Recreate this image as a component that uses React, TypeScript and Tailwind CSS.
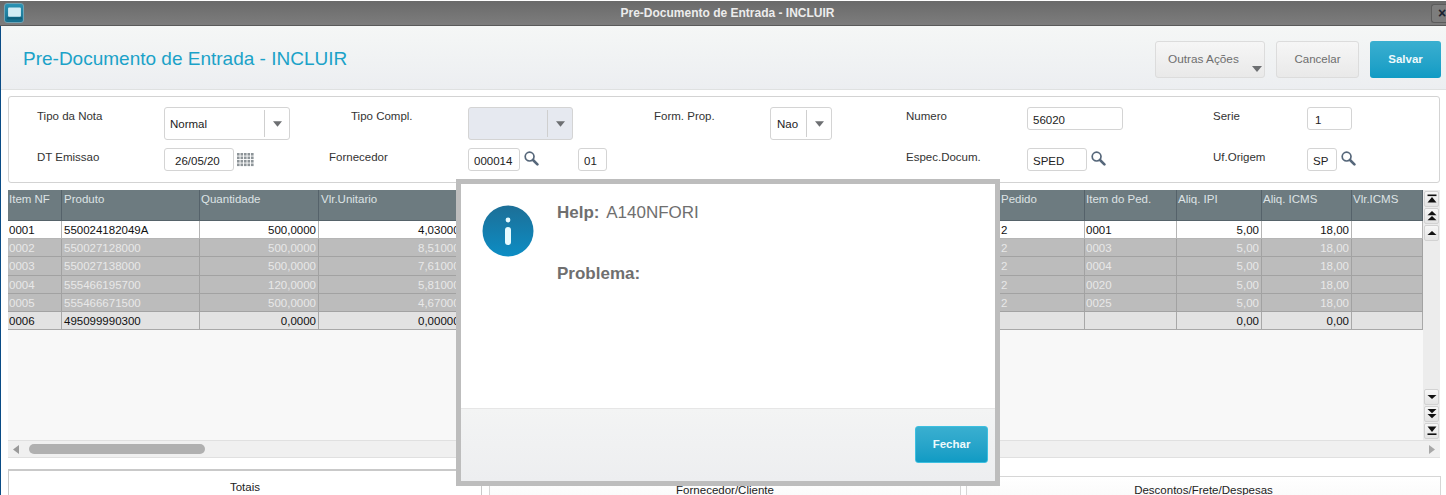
const font = "font-['Liberation_Sans',Arial,sans-serif]"

type Column = { title: string; width: string; right?: boolean; pad: string }

const columns: Column[] = [
  { title: "Item NF", width: "w-[54px]", pad: "pl-[1px]" },
  { title: "Produto", width: "w-[138px]", pad: "pl-[2px]" },
  { title: "Quantidade", width: "w-[119px]", right: true, pad: "pl-[1px]" },
  { title: "Vlr.Unitario", width: "w-[150px]", right: true, pad: "pl-[2px]" },
  { title: "", width: "w-[531px]", pad: "" },
  { title: "Pedido", width: "w-[85px]", pad: "pl-[1px]" },
  { title: "Item do Ped.", width: "w-[92px]", pad: "pl-[1px]" },
  { title: "Aliq. IPI", width: "w-[85px]", right: true, pad: "pl-[1px]" },
  { title: "Aliq. ICMS", width: "w-[90px]", right: true, pad: "pl-[1px]" },
  { title: "Vlr.ICMS", width: "w-[71px]", right: true, pad: "pl-[1px]" },
]

const rows = [
  ["0001", "550024182049A", "500,0000", "4,030000", "", "2", "0001", "5,00", "18,00", ""],
  ["0002", "550027128000", "500,0000", "8,510000", "", "2", "0003", "5,00", "18,00", ""],
  ["0003", "550027138000", "500,0000", "7,610000", "", "2", "0004", "5,00", "18,00", ""],
  ["0004", "555466195700", "120,0000", "5,810000", "", "2", "0020", "5,00", "18,00", ""],
  ["0005", "555466671500", "500,0000", "4,670000", "", "2", "0025", "5,00", "18,00", ""],
  ["0006", "495099990300", "0,0000", "0,000000", "", "", "", "0,00", "0,00", ""],
]

function rowTone(index: number) {
  if (index === 0) return "bg-white text-[#111] border-[#b5b5b5]"
  if (index === 5) return "bg-[#e2e2e2] text-[#111] border-[#a8a8a8]"
  return "bg-[#bcbcbc] text-[#e8e8e8] border-[#a2a2a2]"
}

function Caret({ className }: { className: string }) {
  return (
    <svg viewBox="0 0 10 6" className={className}>
      <polygon points="0,0 10,0 5,6" fill="#6d6f72" />
    </svg>
  )
}

function Label({ width, children }: { width: string; children?: string }) {
  return <div className={`${width} shrink-0 h-[19px] leading-[19px] text-[11.5px] text-[#333]`}>{children}</div>
}

function Field({ width, pad = "pl-[5px]", children }: { width: string; pad?: string; children: string }) {
  return (
    <div className={`${width} ${pad} shrink-0 h-[23px] leading-[24px] bg-white border border-[#d4d4d4] rounded-[3px] text-[11.5px] text-[#222]`}>
      {children}
    </div>
  )
}

function Combo({ width, value, disabled, pad = "pl-[5px]" }: { width: string; value?: string; disabled?: boolean; pad?: string }) {
  return (
    <div
      className={`${width} shrink-0 h-[33px] flex items-center border border-[#d4d4d4] rounded-[3px] text-[11.5px] text-[#222] ${
        disabled ? "bg-[#e6e9f0]" : "bg-white"
      }`}
    >
      <span className={`flex-1 ${pad} pt-[2px]`}>{value}</span>
      <span className="w-[25px] flex h-[27px] items-center justify-center border-l border-[#cfcfcf]">
        <Caret className="w-[9px] h-[6px]" />
      </span>
    </div>
  )
}

// magnifier beside the lookup fields
function Lookup() {
  return (
    <svg viewBox="0 0 15 15" className="ml-[4px] mt-[3px] w-[15px] h-[15px] shrink-0">
      <circle cx="5.6" cy="5.6" r="4.4" fill="none" stroke="#56677a" strokeWidth="1.7" />
      <line x1="9" y1="9" x2="13.4" y2="13.4" stroke="#56677a" strokeWidth="2.6" strokeLinecap="round" />
    </svg>
  )
}

function CalendarGrid() {
  const cells = []
  for (let y = 0; y < 4; y++) {
    for (let x = 0; x < 5; x++) {
      cells.push(<rect key={`${x}-${y}`} x={x * 3.5} y={y * 3.5} width="2.6" height="2.6" fill="#8d9498" />)
    }
  }
  return (
    <svg viewBox="0 0 17 14" className="ml-[3px] mt-[5px] w-[17px] h-[14px] shrink-0">
      {cells}
    </svg>
  )
}

// arrows used by the vertical paging buttons
function PagerButton({ kind }: { kind: "top" | "pageUp" | "up" | "down" | "pageDown" | "bottom" }) {
  const shapes = {
    top: (
      <>
        <rect x="0.5" y="0.5" width="9" height="1.6" />
        <polygon points="5,3 9.5,8.5 0.5,8.5" />
      </>
    ),
    pageUp: (
      <>
        <polygon points="5,0 9.5,4.2 0.5,4.2" />
        <polygon points="5,5 9.5,9.2 0.5,9.2" />
      </>
    ),
    up: <polygon points="5,3 9.5,7 0.5,7" />,
    down: <polygon points="0.5,3 9.5,3 5,7" />,
    pageDown: (
      <>
        <polygon points="0.5,0 9.5,0 5,4.2" />
        <polygon points="0.5,5 9.5,5 5,9.2" />
      </>
    ),
    bottom: (
      <>
        <polygon points="0.5,0.5 9.5,0.5 5,6" />
        <rect x="0.5" y="7.4" width="9" height="1.6" />
      </>
    ),
  }
  return (
    <div className="w-[15px] h-[16px] flex items-center justify-center rounded-[2px] border border-[#d2d2d2] bg-gradient-to-b from-[#f7f7f7] to-[#e4e4e4]">
      <svg viewBox="0 0 10 10" className="w-[10px] h-[10px]" fill="#111">
        {shapes[kind]}
      </svg>
    </div>
  )
}

function GridTable() {
  return (
    <div className="w-[1415px] shrink-0">
      <div className="flex h-[31px] bg-[#6d7b80] border-b border-[#56636a]">
        {columns.map((col, i) => (
          <div key={i} className={`${col.width} ${col.pad} shrink-0 border-r border-[#55626a] text-[11.5px] leading-[18px] text-[#dde3e5]`}>
            {col.title}
          </div>
        ))}
      </div>
      {rows.map((row, r) => (
        <div key={r} className={`flex h-[18.2px] border-b ${rowTone(r)}`}>
          {columns.map((col, c) => (
            <div
              key={c}
              className={`${col.width} shrink-0 border-r border-inherit text-[11.5px] leading-[18px] overflow-hidden whitespace-nowrap ${
                col.right ? "text-right pr-[2px]" : col.pad
              }`}
            >
              {row[c]}
            </div>
          ))}
        </div>
      ))}
    </div>
  )
}

function HelpDialog() {
  return (
    <div className="absolute left-[456px] top-[179px] w-[544px] h-[307px] flex flex-col border-[5px] border-[#bdbdbd] bg-white">
      <div className="flex-1 flex">
        <div className="w-[96px] shrink-0 pl-[21px] pt-[21px]">
          <svg viewBox="0 0 52 52" className="w-[52px] h-[52px]">
            <defs>
              <linearGradient id="infoFill" x1="0" y1="0" x2="0" y2="1">
                <stop offset="0" stopColor="#1d6f97" />
                <stop offset="1" stopColor="#0c8dc4" />
              </linearGradient>
            </defs>
            <circle cx="26" cy="26" r="25.5" fill="url(#infoFill)" />
            <circle cx="26" cy="15" r="2.4" fill="#e6fbff" />
            <rect x="23" y="22" width="6" height="18" rx="3" fill="#e6fbff" />
          </svg>
        </div>
        <div className="text-[17px] text-[#6f6f6f] leading-[20px]">
          <div className="pt-[19px]">
            <b>Help:</b> <span className="pl-[2px]">A140NFORI</span>
          </div>
          <div className="pt-[41px] font-bold">Problema:</div>
        </div>
      </div>
      <div className="h-[73px] flex items-start justify-end pt-[17px] pr-[7px] border-t border-[#e6e6e6] bg-gradient-to-b from-[#f3f4f4] to-[#edeef0]">
        <div className="w-[73px] h-[37px] flex items-center justify-center rounded-[3px] border border-[#3cbfe0] bg-gradient-to-b from-[#39afd0] to-[#0f9bc4] text-[11.5px] font-bold text-[#eef9fc]">
          Fechar
        </div>
      </div>
    </div>
  )
}

export default function App() {
  return (
    <div className={`${font} relative w-[1446px] h-[495px] overflow-hidden bg-white flex flex-col`}>
      {/* window bar */}
      <div className="mt-[1px] h-[25px] shrink-0 flex items-center justify-between pl-[4px] border-b border-[#5a5a5a] bg-gradient-to-b from-[#6a6a6a] to-[#7d7d7d]">
        <div className="w-[20px] h-[20px] flex items-center justify-center rounded-[3px] border border-[#6fa3b4] bg-gradient-to-b from-[#2b93b4] to-[#16708f]">
          <svg viewBox="0 0 14 12" className="w-[15px] h-[13px]">
            <rect x="1" y="0.5" width="12" height="8.5" rx="1" fill="#d2ecf4" />
            <rect x="0" y="9.5" width="14" height="2" rx="0.5" fill="#0f5f7b" />
          </svg>
        </div>
        <span className="text-[12px] font-bold text-[#ececec]">Pre-Documento de Entrada - INCLUIR</span>
        <div className="w-[15px] h-[19px] flex items-center justify-center pl-[6px] rounded-l-[3px] border border-r-0 border-[#5c5c5c] bg-[#7d7d7d] text-[14px] font-bold leading-none text-[#1c2230]">
          ×
        </div>
      </div>

      <div className="flex-1 flex flex-col border-l border-[#0a4c86]">
        {/* page heading and actions */}
        <div className="h-[64px] shrink-0 flex items-start justify-between pl-[22px] pr-[5px] border-b border-[#dfe1e1] bg-gradient-to-b from-[#f5f7f6] to-[#eceef1]">
          <h1 className="pt-[22px] text-[19px] leading-[22px] text-[#1ba2c8] font-normal">Pre-Documento de Entrada - INCLUIR</h1>
          <div className="flex gap-[11px] pt-[15px]">
            <div className="relative w-[110px] h-[37px] flex items-center pl-[12px] rounded-[3px] border border-[#dcdcdc] bg-gradient-to-b from-[#f6f6f6] to-[#e9e9e9] text-[11.8px] text-[#6e6e6e]">
              Outras Ações
              <Caret className="absolute right-[2px] bottom-[5px] w-[10px] h-[6px]" />
            </div>
            <div className="w-[83px] h-[37px] flex items-center justify-center rounded-[3px] border border-[#dcdcdc] bg-gradient-to-b from-[#f6f6f6] to-[#e9e9e9] text-[11.5px] text-[#6e6e6e]">
              Cancelar
            </div>
            <div className="w-[71px] h-[37px] flex items-center justify-center rounded-[3px] bg-gradient-to-b from-[#39afd0] to-[#0f9bc4] text-[11.5px] font-bold text-[#eef9fc]">
              Salvar
            </div>
          </div>
        </div>

        {/* header fields */}
        <div className="mt-[6px] ml-[7px] w-[1432px] h-[87px] shrink-0 border border-[#d3d3d3] rounded-[3px] pl-[28px] pt-[10px]">
          <div className="flex h-[41px]">
            <Label width="w-[127px]">Tipo da Nota</Label>
            <div className="w-[187px] shrink-0">
              <Combo width="w-[126px]" value="Normal" />
            </div>
            <Label width="w-[117px]">Tipo Compl.</Label>
            <div className="w-[186px] shrink-0">
              <Combo width="w-[105px]" disabled />
            </div>
            <Label width="w-[116px]">Form. Prop.</Label>
            <div className="w-[136px] shrink-0">
              <Combo width="w-[62px]" value="Nao" pad="pl-[6px]" />
            </div>
            <Label width="w-[121px]">Numero</Label>
            <div className="w-[186px] shrink-0">
              <Field width="w-[96px]">56020</Field>
            </div>
            <Label width="w-[94px]">Serie</Label>
            <Field width="w-[45px]" pad="pl-[7px]">1</Field>
          </div>
          <div className="flex">
            <Label width="w-[127px]">DT Emissao</Label>
            <div className="w-[165px] shrink-0 flex">
              <Field width="w-[70px]" pad="pl-[10px]">26/05/20</Field>
              <CalendarGrid />
            </div>
            <Label width="w-[139px]">Fornecedor</Label>
            <div className="w-[110px] shrink-0 flex">
              <Field width="w-[52px]">000014</Field>
              <Lookup />
            </div>
            <div className="w-[328px] shrink-0">
              <Field width="w-[29px]">01</Field>
            </div>
            <Label width="w-[121px]">Espec.Docum.</Label>
            <div className="w-[186px] shrink-0 flex">
              <Field width="w-[60px]">SPED</Field>
              <Lookup />
            </div>
            <Label width="w-[94px]">Uf.Origem</Label>
            <div className="flex">
              <Field width="w-[30px]">SP</Field>
              <Lookup />
            </div>
          </div>
        </div>

        {/* items grid */}
        <div className="mt-[7px] ml-[7px] w-[1432px] h-[250px] shrink-0 flex bg-[#f8f8f8]">
          <GridTable />
          <div className="w-[17px] shrink-0 flex flex-col justify-between items-center py-[1px] bg-[#ececec]">
            <div className="flex flex-col gap-[1px]">
              <PagerButton kind="top" />
              <PagerButton kind="pageUp" />
              <PagerButton kind="up" />
            </div>
            <div className="flex flex-col gap-[1px]">
              <PagerButton kind="down" />
              <PagerButton kind="pageDown" />
              <PagerButton kind="bottom" />
            </div>
          </div>
        </div>
        <div className="ml-[7px] w-[1432px] h-[18px] shrink-0 flex items-center justify-between pl-[5px] pr-[5px] bg-[#f0f0f0] border-y border-[#e0e0e0]">
          <div className="flex items-center gap-[10px]">
            <svg viewBox="0 0 6 9" className="w-[6px] h-[9px]">
              <polygon points="6,0 6,9 0,4.5" fill="#9a9a9a" />
            </svg>
            <div className="w-[176px] h-[10px] rounded-[5px] bg-[#b0b0b0]" />
          </div>
          <svg viewBox="0 0 6 9" className="w-[6px] h-[9px]">
            <polygon points="0,0 0,9 6,4.5" fill="#a8a8a8" />
          </svg>
        </div>

        {/* folders */}
        <div className="mt-[11px] ml-[7px] flex items-start text-center text-[11.5px] text-[#222]">
          <div className="w-[474px] h-[40px] pt-[8px] border-x border-t-2 border-[#c9c9c9] bg-white">Totais</div>
          <div className="ml-[7px] mt-[7px] w-[472px] h-[40px] pt-[5px] border-x border-t border-[#d6d6d6] bg-gradient-to-b from-white to-[#f6f6f6]">
            Fornecedor/Cliente
          </div>
          <div className="ml-[5px] mt-[7px] w-[475px] h-[40px] pt-[5px] border-x border-t border-[#d6d6d6] bg-gradient-to-b from-white to-[#f6f6f6]">
            Descontos/Frete/Despesas
          </div>
        </div>
      </div>

      <HelpDialog />
    </div>
  )
}
